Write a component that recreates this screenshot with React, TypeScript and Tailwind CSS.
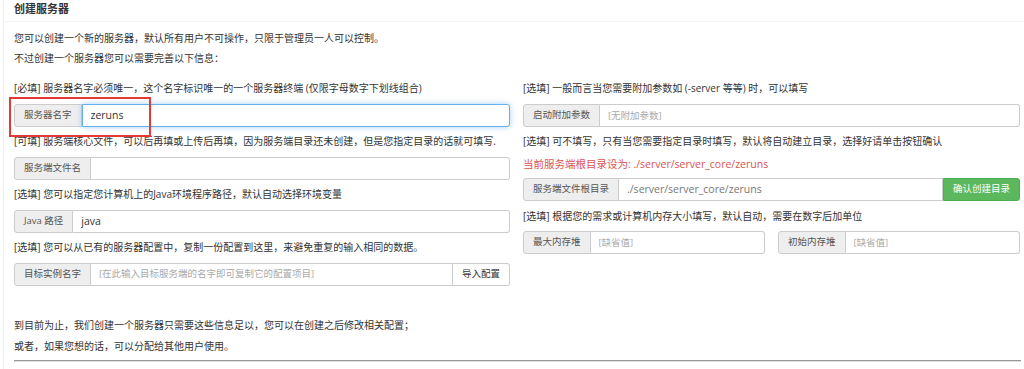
import React from "react";

const Addon = ({ children }: { children: React.ReactNode }) => (
  <span className="flex items-center px-[9px] bg-[#eee] border border-[#ccc] rounded-l-[3px] text-[#555] text-[9.5px] whitespace-nowrap">
    {children}
  </span>
);

const Field = ({
  label,
  value,
  placeholder,
  focused,
  muted,
  button,
  green,
}: {
  label: string;
  value?: string;
  placeholder?: string;
  focused?: boolean;
  muted?: boolean;
  button?: string;
  green?: boolean;
}) => (
  <div className="flex h-[23px]">
    <Addon>{label}</Addon>
    <input
      readOnly
      defaultValue={value}
      placeholder={placeholder}
      className={
        focused
          ? "flex-1 min-w-0 px-[8px] text-[10.5px] text-[#333] bg-white border border-[#66afe9] rounded-r-[3px] shadow-[0_0_6px_rgba(102,175,233,0.55)] outline-none"
          : muted
          ? "flex-1 min-w-0 px-[8px] text-[10.5px] text-[#777] bg-white border border-l-0 border-[#ccc] outline-none"
          : button
          ? "flex-1 min-w-0 px-[8px] text-[9.5px] text-[#333] placeholder:text-[#aaa] bg-white border border-l-0 border-[#ccc] outline-none"
          : "flex-1 min-w-0 px-[8px] text-[10.5px] text-[#333] placeholder:text-[#aaa] placeholder:text-[9.5px] bg-white border border-l-0 border-[#ccc] rounded-r-[3px] outline-none"
      }
    />
    {button &&
      (green ? (
        <button className="px-[9px] text-[9.5px] text-white bg-[#5cb85c] border border-[#4cae4c] rounded-r-[3px] whitespace-nowrap">
          {button}
        </button>
      ) : (
        <button className="px-[9px] text-[9.5px] text-[#333] bg-white border border-l-0 border-[#ccc] rounded-r-[3px] whitespace-nowrap">
          {button}
        </button>
      ))}
  </div>
);

const Label = ({ children }: { children: React.ReactNode }) => (
  <p className="leading-[20px] text-[10px] text-[#333] whitespace-nowrap">{children}</p>
);

export default function App() {
  return (
    <div className="relative w-[1024px] h-[369px] bg-white overflow-hidden font-['Open_Sans','Noto_Sans_CJK_SC',sans-serif]">
      <div className="ml-[3px] h-full border-l border-[#eee]">
        <div className="h-[22px] pl-[10px] flex items-center border-b border-[#f4f4f4]">
          <h3 className="text-[11px] font-bold text-[#333] pb-[2px]">创建服务器</h3>
        </div>

        <div className="pl-[10px] pr-[3px]">
          <div className="mt-[6px]">
            <Label>您可以创建一个新的服务器，默认所有用户不可操作，只限于管理员一人可以控制。</Label>
            <Label>不过创建一个服务器您可以需要完善以下信息：</Label>
          </div>

          <div className="mt-[10px] grid grid-cols-[496px_497px] gap-x-[13px]">
            <div className="flex flex-col">
              <Label>[必填] 服务器名字必须唯一，这个名字标识唯一的一个服务器终端 (仅限字母数字下划线组合)</Label>
              <div className="mt-[6px] mb-[4px]">
                <Field label="服务器名字" value="zeruns" focused />
              </div>
              <Label>[可填] 服务端核心文件，可以后再填或上传后再填，因为服务端目录还未创建，但是您指定目录的话就可填写.</Label>
              <div className="mt-[6px] mb-[4px]">
                <Field label="服务端文件名" />
              </div>
              <Label>[选填] 您可以指定您计算机上的Java环境程序路径，默认自动选择环境变量</Label>
              <div className="mt-[6px] mb-[4px]">
                <Field label="Java 路径" value="java" />
              </div>
              <Label>[选填] 您可以从已有的服务器配置中，复制一份配置到这里，来避免重复的输入相同的数据。</Label>
              <div className="mt-[6px]">
                <Field label="目标实例名字" placeholder="[在此输入目标服务端的名字即可复制它的配置项目]" button="导入配置" />
              </div>
            </div>

            <div className="flex flex-col">
              <Label>[选填] 一般而言当您需要附加参数如 (-server 等等) 时，可以填写</Label>
              <div className="mt-[6px] mb-[4px]">
                <Field label="启动附加参数" placeholder="[无附加参数]" />
              </div>
              <Label>[选填] 可不填写，只有当您需要指定目录时填写，默认将自动建立目录，选择好请单击按钮确认</Label>
              <p className="mt-[3px] leading-[20px] text-[10.5px] text-[#d9534f]">当前服务端根目录设为: ./server/server_core/zeruns</p>
              <div className="mt-[4px] mb-[5px]">
                <Field label="服务端文件根目录" value="./server/server_core/zeruns" muted button="确认创建目录" green />
              </div>
              <Label>[选填] 根据您的需求或计算机内存大小填写，默认自动，需要在数字后加单位</Label>
              <div className="mt-[5px] grid grid-cols-2 gap-x-[13px]">
                <Field label="最大内存堆" placeholder="[缺省值]" />
                <Field label="初始内存堆" placeholder="[缺省值]" />
              </div>
            </div>
          </div>

          <div className="mt-[29px]">
            <p className="leading-[21px] text-[10px] text-[#333]">到目前为止，我们创建一个服务器只需要这些信息足以，您可以在创建之后修改相关配置；</p>
            <p className="leading-[21px] text-[10px] text-[#333]">或者，如果您想的话，可以分配给其他用户使用。</p>
          </div>
          <div className="mt-[3px] border-t border-[#999] border-b border-b-[#ddd]" />
        </div>
      </div>

      <div className="absolute left-[9px] top-[97px] w-[142px] h-[40px] border-2 border-[#e53935]" />
    </div>
  );
}
